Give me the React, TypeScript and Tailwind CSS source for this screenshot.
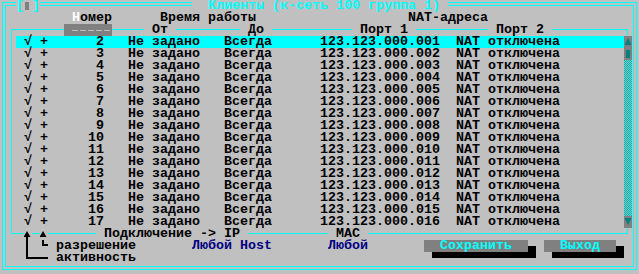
import React from 'react';

const clients = Array.from({ length: 16 }, (_, i) => i + 2);

const sp = (n: number) => ' '.repeat(n);

function ipFor(n: number) {
  return `123.123.000.${String(n - 1).padStart(3, '0')}`;
}

function UpMark({ stem }: { stem?: boolean }) {
  return (
    <span className="w-[8px] h-[12px] bg-[#c0c0c0] flex">
      <svg width="8" height="12" viewBox="0 0 8 12">
        <path d="M3 3 L6.5 9 L-0.5 9 Z" fill="#000" />
        {stem && <rect x="2" y="9" width="2" height="3" fill="#000" />}
      </svg>
    </span>
  );
}

function Shadow() {
  return (
    <span className="w-[8px] flex flex-col">
      <span className="mt-[6px] h-[6px] bg-black" />
    </span>
  );
}

export default function App() {
  return (
    <div className="w-[639px] h-[274px] overflow-hidden bg-[#c0c0c0] pt-[2px] px-[2px] font-['Liberation_Mono',monospace] font-bold text-[13.333px] leading-[12px] text-black">
      {/* double frame */}
      <div className="h-[268px] border border-[#00ffff] p-[2px]">
        <div className="h-[262px] border border-[#00ffff]">
          <div className="-mt-[6px] -ml-[6px] w-[639px]">
            {/* title */}
            <div className="flex h-[12px] whitespace-pre">
              <span className="w-[16px]" />
              <span className="w-[8px] bg-[#c0c0c0] text-[#00ffff]">[</span>
              <span className="w-[8px] bg-[#c0c0c0] pl-[1px] pt-[2px]">
                <span className="block w-[4px] h-[8px] bg-[#808080]" />
              </span>
              <span className="w-[8px] bg-[#c0c0c0] text-[#00ffff]">]</span>
              <span className="w-[152px]" />
              <span className="w-[256px] bg-[#c0c0c0] text-[#00ffff]">
                {'  Клиенты (к-сеть 100 группа 1) '}
              </span>
            </div>

            {/* column groups */}
            <div className="flex h-[12px] whitespace-pre">
              <span>{sp(9)}</span>
              <span className="text-white">Н</span>
              <span>{'омер' + sp(6) + 'Время работы' + sp(19) + 'NAT-адреса'}</span>
            </div>

            {/* table */}
            <div className="mt-[5px] mb-[6px] ml-[11px] w-[617px] border border-[#00ffff]">
              <div className="-mt-[6px] -ml-[12px] flex h-[12px] whitespace-pre">
                <span className="w-[64px]" />
                <span className="w-[48px] bg-[#808080] flex items-center gap-[2px] pl-[8px]">
                  <span className="w-[6px] h-[1px] bg-[#c0c0c0]" />
                  <span className="w-[6px] h-[1px] bg-[#c0c0c0]" />
                  <span className="w-[6px] h-[1px] bg-[#c0c0c0]" />
                  <span className="w-[6px] h-[1px] bg-[#c0c0c0]" />
                  <span className="w-[6px] h-[1px] bg-[#c0c0c0]" />
                </span>
                <span className="w-[32px]" />
                <span className="bg-[#c0c0c0]"> От </span>
                <span className="w-[64px]" />
                <span className="bg-[#c0c0c0]"> До </span>
                <span className="w-[80px]" />
                <span className="bg-[#c0c0c0]"> Порт 1 </span>
                <span className="w-[72px]" />
                <span className="bg-[#c0c0c0]"> Порт 2 </span>
              </div>

              <div className="ml-[4px] w-[616px] flex">
                <div className="w-[608px]">
                  {clients.map((n) => (
                    <div
                      key={n}
                      className={n === 2 ? 'flex h-[12px] whitespace-pre bg-[#00ffff]' : 'flex h-[12px] whitespace-pre'}
                    >
                      <span className="w-[8px]" />
                      <span className="w-[8px]">√</span>
                      <span>
                        {' +' + String(n).padStart(7) + sp(3) + 'Не задано' + sp(3) + 'Всегда' + sp(6) + ipFor(n) + sp(2) + 'NAT отключена'}
                      </span>
                    </div>
                  ))}
                </div>
                {/* scrollbar */}
                <div className="w-[8px] flex flex-col">
                  <div className="h-[12px] bg-[#808080]">
                    <svg width="8" height="12" viewBox="0 0 8 12">
                      <path d="M4 2 L7 8 L1 8 Z" fill="#008080" />
                      <rect x="1" y="8" width="6" height="1" fill="#008080" />
                    </svg>
                  </div>
                  <div className="h-[12px] bg-[#808080] pl-[2px] pt-[2px]">
                    <div className="w-[4px] h-[8px] bg-[#008080]" />
                  </div>
                  <div className="h-[156px] bg-[image:repeating-conic-gradient(#00ffff_0_25%,#808080_0_50%)] bg-[length:2px_2px]" />
                  <div className="h-[12px] bg-[#808080]">
                    <svg width="8" height="12" viewBox="0 0 8 12">
                      <rect x="1" y="2" width="6" height="1" fill="#008080" />
                      <path d="M1 3 L7 3 L4 9 Z" fill="#008080" />
                    </svg>
                  </div>
                </div>
              </div>

              <div className="-ml-[12px] -mb-[7px] flex h-[12px] whitespace-pre">
                <span className="w-[24px]" />
                <UpMark stem />
                <span className="w-[8px]" />
                <UpMark />
                <span className="w-[48px]" />
                <span className="bg-[#c0c0c0]">{' Подключение -> IP '}</span>
                <span className="w-[80px]" />
                <span className="bg-[#c0c0c0]"> MAC </span>
              </div>
            </div>

            {/* legend + buttons */}
            <div className="flex h-[12px] whitespace-pre">
              <span className="w-[24px]" />
              <span className="w-[8px] pl-[2px]">
                <span className="block w-[2px] h-[12px] bg-black" />
              </span>
              <span className="w-[8px]" />
              <span className="w-[8px] pl-[2px]">
                <span className="block w-[6px] h-[6px] border-l-2 border-b-2 border-black" />
              </span>
              <span className="w-[8px]" />
              <span>
                {'разрешение' + sp(7)}
                <span className="text-[#000080]">Любой Host</span>
                {sp(7)}
                <span className="text-[#000080]">Любой</span>
                {sp(7)}
              </span>
              <span className="w-[104px] bg-[#808080] text-[#00ffff] text-center">Сохранить</span>
              <Shadow />
              <span className="w-[8px]" />
              <span className="w-[72px] bg-[#808080] text-[#00ffff] text-center">Выход</span>
              <Shadow />
            </div>
            <div className="flex h-[12px] whitespace-pre">
              <span className="w-[24px]" />
              <span className="w-[24px] pl-[2px]">
                <span className="block w-[22px] h-[7px] border-l-2 border-b-2 border-black" />
              </span>
              <span className="w-[8px]" />
              <span>активность</span>
              <span className="w-[296px]" />
              <span className="w-[104px] h-[6px] bg-black" />
              <span className="w-[16px]" />
              <span className="w-[72px] h-[6px] bg-black" />
            </div>
          </div>
        </div>
      </div>
    </div>
  );
}
